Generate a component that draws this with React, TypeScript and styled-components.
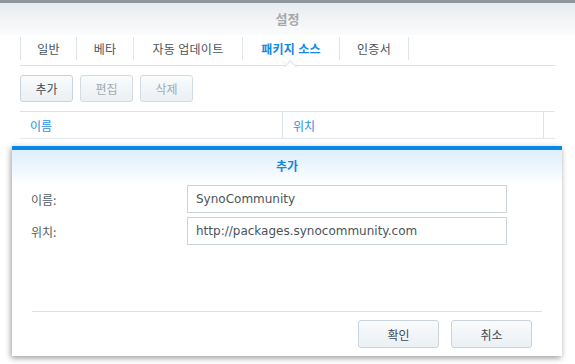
import * as React from 'react';
import styled, { createGlobalStyle } from 'styled-components';

const GlobalStyle = createGlobalStyle`
  html, body {
    margin: 0;
    padding: 0;
    background: #fff;
  }
  body {
    font-family: 'Noto Sans CJK KR', 'DejaVu Sans', sans-serif;
    font-size: 12px;
    color: #414b55;
  }
`;

// tab label and its width on the strip
const tabs: [string, number][] = [
  ['일반', 57],
  ['베타', 57],
  ['자동 업데이트', 109],
  ['패키지 소스', 97],
  ['인증서', 69],
];
const activeTab = 3;

export default function App() {
  return (
    <Window>
      <GlobalStyle />
      <TopBar />
      <Header>설정</Header>
      <TabStrip>
        {tabs.map(([t, w], i) => (
          <Tab key={t} w={w} active={i === activeTab}>
            {t}
          </Tab>
        ))}
      </TabStrip>
      <Toolbar>
        <Button>추가</Button>
        <Button disabled>편집</Button>
        <Button disabled>삭제</Button>
      </Toolbar>
      <GridHeader>
        <Column>이름</Column>
        <Column>위치</Column>
        <Column />
      </GridHeader>

      <Dialog>
        <DialogTitle>추가</DialogTitle>
        <Form>
          <Label>이름:</Label>
          <Field>SynoCommunity</Field>
          <Label>위치:</Label>
          <Field>http://packages.synocommunity.com</Field>
        </Form>
        <Footer>
          <FooterButton>확인</FooterButton>
          <FooterButton>취소</FooterButton>
        </Footer>
      </Dialog>
    </Window>
  );
}

const Window = styled.div`
  position: relative;
  width: 575px;
  height: 364px;
  overflow: hidden;
  background: #fff;
`;

const TopBar = styled.div`
  height: 3px;
  background: #8f969e;
`;

const Header = styled.div`
  height: 32px;
  display: flex;
  align-items: center;
  justify-content: center;
  background: linear-gradient(#e8ebef, #fbfcfd);
  color: #a3a8ad;
  font-size: 13px;
  font-weight: 700;
  padding-bottom: 1px;
  box-sizing: border-box;
`;

const TabStrip = styled.div`
  display: flex;
  margin: 0 20px;
  height: 31px;
  border-bottom: 1px solid #d9dfe5;
  box-sizing: border-box;
  align-items: center;
  padding-bottom: 6px;
  padding-top: 2px;
`;

const Tab = styled.div<{ active?: boolean; w: number }>`
  position: relative;
  height: 23px;
  width: ${p => p.w}px;
  display: flex;
  align-items: center;
  justify-content: center;
  box-sizing: border-box;
  border-right: 1px solid #dfe5ea;
  font-size: 12px;
  letter-spacing: 0.3px;
  white-space: nowrap;
  color: ${p => (p.active ? '#1288e4' : '#48525c')};
  font-weight: ${p => (p.active ? 700 : 400)};

  &:first-child {
    border-left: 1px solid #dfe5ea;
  }

  ${p =>
    p.active &&
    `
    &::after {
      content: '';
      position: absolute;
      left: 50%;
      bottom: -11px;
      width: 8px;
      height: 8px;
      margin-left: -5px;
      background: #fff;
      border-left: 1px solid #d9dfe5;
      border-top: 1px solid #d9dfe5;
      transform: rotate(45deg);
    }
  `}
`;

const Toolbar = styled.div`
  display: flex;
  gap: 7px;
  margin: 9px 20px 0;
`;

const Button = styled.button`
  width: 53px;
  height: 27px;
  border: 1px solid #c9d3dc;
  border-radius: 3px;
  background: linear-gradient(#f9fbfc, #ebf0f4);
  font-family: inherit;
  font-size: 12px;
  color: #414b55;
  padding: 0;

  &:disabled {
    color: #a2aab2;
    border-color: #d3dbe2;
  }
`;

const GridHeader = styled.div`
  display: grid;
  grid-template-columns: 263px 261px 1fr;
  margin: 9px 20px 0;
  height: 28px;
  border-top: 1px solid #dce4eb;
  border-bottom: 1px solid #e3e9ee;
  box-sizing: border-box;
`;

const Column = styled.div`
  display: flex;
  align-items: center;
  padding-left: 10px;
  color: #2a8fe0;
  font-size: 12px;
  border-right: 1px solid #dce4eb;

  &:last-child {
    border-right: none;
  }
`;

const Dialog = styled.div`
  position: absolute;
  left: 12px;
  top: 146px;
  width: 550px;
  height: 210px;
  box-sizing: border-box;
  border-top: 4px solid #0b87e2;
  background: #fff;
  box-shadow: -1px 2px 6px rgba(0, 0, 0, 0.4);
  display: flex;
  flex-direction: column;
`;

const DialogTitle = styled.div`
  height: 35px;
  display: flex;
  align-items: center;
  justify-content: center;
  background: linear-gradient(#ddeefc, #ffffff);
  color: #1288e4;
  font-size: 12px;
  font-weight: 700;
  box-sizing: border-box;
  padding-bottom: 4px;
`;

const Form = styled.div`
  display: grid;
  grid-template-columns: 156px 320px;
  row-gap: 4px;
  padding-left: 19px;
  flex: 1;
  align-content: start;
`;

const Label = styled.div`
  height: 28px;
  display: flex;
  align-items: center;
  font-size: 12px;
  color: #535d67;
`;

const Field = styled.div`
  height: 28px;
  box-sizing: border-box;
  border: 1px solid #c9d4dd;
  display: flex;
  align-items: center;
  padding-left: 8px;
  font-family: 'DejaVu Sans', Verdana, sans-serif;
  font-size: 12px;
  color: #4a545e;
`;

const Footer = styled.div`
  display: flex;
  justify-content: flex-end;
  gap: 12px;
  margin: 0 20px;
  padding: 8px 10px 8px 0;
  border-top: 1px solid #dedede;
`;

const FooterButton = styled(Button)`
  width: 81px;
  height: 28px;
`;
